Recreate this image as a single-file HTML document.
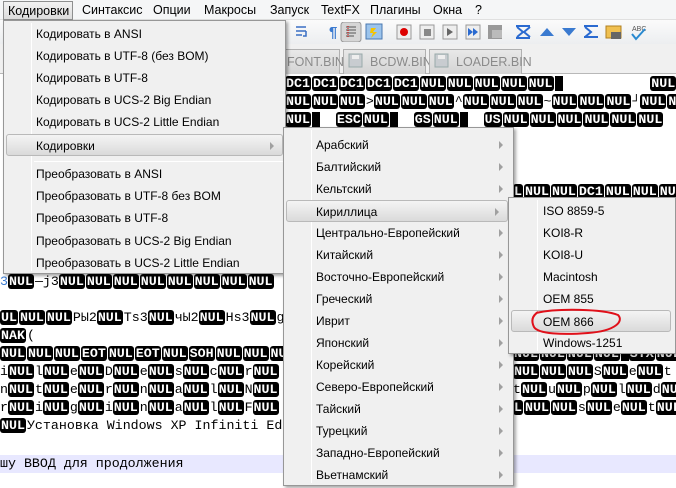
<!DOCTYPE html>
<html><head><meta charset="utf-8"><style>
*{margin:0;padding:0;box-sizing:border-box}
body{width:676px;height:488px;overflow:hidden;position:relative;background:#fff;font-family:"Liberation Sans","Noto Sans CJK SC",sans-serif;font-size:12px;color:#000}
.mb{position:absolute;left:0;top:0;width:676px;height:20px;background:#f5f6f7;border-bottom:1px solid #e0e0e0;z-index:2}
.mb span{position:absolute;top:3px;font-size:12.5px}
.mb .act{left:3px;top:1px;width:70px;height:19px;border:1px solid #8e8f8f;background:linear-gradient(#f2f2f2,#dcdcdc);padding:2px 0 0 4px}
.tb{position:absolute;left:0;top:20px;width:676px;height:24px;background:linear-gradient(#fbfbfb,#eceef0)}
.tabs{position:absolute;left:0;top:44px;width:676px;height:30px;background:#f0f0f0;border-bottom:1px solid #b8b8b8}
.tab{position:absolute;top:49px;height:25px;background:linear-gradient(#e8e8e8,#d4d4d4);border:1px solid #b0b0b0;border-bottom:none;color:#8a8a8a;font-size:12.5px;padding:5px 0 0 8px}
.ed{position:absolute;left:0;top:0;font-family:"Liberation Mono",monospace;font-size:13.3px;line-height:18px;white-space:pre;color:#000}
.r{position:absolute;height:18px;white-space:pre}
i{font-style:normal;background:#000;color:#fff;border-radius:3px;font-size:13.3px;font-weight:bold;padding:0 1px;margin-right:1px}
.m{position:absolute;background:#f0f0f0;border:1px solid #979797;box-shadow:2px 2px 3px rgba(0,0,0,.35);z-index:3}
.m .g{position:absolute;top:2px;bottom:2px;width:1px;background:#e2e3e3;border-right:1px solid #fff}
.it{position:absolute;left:2px;right:2px;height:22px;padding-top:4px;font-size:12px}
.hl{background:linear-gradient(#f4f4f4,#dadada);border:1px solid #b9b9b9;border-radius:3px}
.ar{position:absolute;right:8px;top:7px;width:0;height:0;border-left:4px solid #a0a0a0;border-top:4px solid transparent;border-bottom:4px solid transparent}
.sep{position:absolute;height:1px;background:#e0e0e0;border-bottom:1px solid #fff}
</style></head><body>

<div class="mb">
<span class="act">Кодировки</span>
<span style="left:82px">Синтаксис</span>
<span style="left:153px">Опции</span>
<span style="left:204px">Макросы</span>
<span style="left:270px">Запуск</span>
<span style="left:321px">TextFX</span>
<span style="left:370px">Плагины</span>
<span style="left:433px">Окна</span>
<span style="left:475px">?</span>
</div>

<div class="tb"></div>
<svg style="position:absolute;left:286px;top:22px" width="390" height="20">
<g fill="none" stroke="#3a6fc4" stroke-width="1.5"><path d="M10 5h10M10 9h10M10 13h6M20 9v5h-3"/></g>
<text x="43" y="15" fill="#3a7ad0" font-family="Liberation Sans" font-size="15" font-weight="bold">¶</text>
<rect x="55" y="0" width="20" height="20" rx="3" fill="#d6d6d6" stroke="#999"/>
<path d="M60 5h10M60 8h10M60 11h10M60 14h8" stroke="#555"/>
<path d="M62 4v12" stroke="#d00" stroke-dasharray="1 1"/>
<rect x="80" y="2" width="16" height="15" fill="#9cc4ec" stroke="#4a78b0"/><path d="M85 6l5 0-3 4 4 0-6 6 2-5-3 0z" fill="#f5c400"/>
<rect x="111" y="3" width="14" height="14" fill="#eee" stroke="#999"/><circle cx="118" cy="10" r="4" fill="#d00"/>
<rect x="134" y="3" width="14" height="14" fill="#eee" stroke="#999"/><rect x="138" y="7" width="7" height="7" fill="#888"/>
<rect x="157" y="3" width="14" height="14" fill="#eee" stroke="#999"/><path d="M161 6l6 4-6 4z" fill="#666"/>
<rect x="180" y="3" width="14" height="14" fill="#eee" stroke="#999"/><path d="M182 6l5 4-5 4zM187 6l5 4-5 4z" fill="#2a6ad0"/>
<rect x="202" y="3" width="14" height="14" fill="#999"/><rect x="206" y="8" width="10" height="8" fill="#bbb"/>
<path d="M230 4h14M231 5l6 5-6 5M244 5l-6 5 6 5M230 16h14" stroke="#2a6ad0" stroke-width="2" fill="none"/>
<path d="M254 14l7-8 7 8z" fill="#3a7ad0"/>
<path d="M276 6l7 8 7-8z" fill="#3a7ad0"/>
<path d="M298 4h14M299 5l6 5-6 5M312 15h-14" stroke="#2a6ad0" stroke-width="2" fill="none"/>
<rect x="320" y="4" width="15" height="12" fill="#f0c050" stroke="#b08020"/><rect x="325" y="10" width="10" height="7" fill="#666"/>
<text x="346" y="9" font-size="7" fill="#555" font-family="Liberation Sans">ABC</text><path d="M346 12l4 5 9-10" stroke="#2a8ad0" stroke-width="2" fill="none"/>
</svg>

<div class="tabs"></div>
<div class="tab" style="left:270px;width:70px;padding-left:16px">FONT.BIN</div>
<div class="tab" style="left:343px;width:83px;padding-left:26px">BCDW.BIN</div>
<div class="tab" style="left:429px;width:93px;padding-left:26px">LOADER.BIN</div>
<svg style="position:absolute;left:348px;top:53px" width="200" height="16"><rect x="1" y="1" width="13" height="13" fill="#c8ccd0" stroke="#9aa"/><rect x="4" y="2" width="7" height="4" fill="#eee"/><rect x="87" y="1" width="13" height="13" fill="#c8ccd0" stroke="#9aa"/><rect x="90" y="2" width="7" height="4" fill="#eee"/></svg>

<div class="ed">
<div class="r" style="top:75px;left:285px"><i>DC1</i><i>DC1</i><i>DC1</i><i>DC1</i><i>DC1</i><i>NUL</i><i>NUL</i><i>NUL</i><i>NUL</i><i>NUL</i><span style="background:#000"> </span>           <i>NUL</i><i>NUL</i></div>
<div class="r" style="top:93px;left:285px"><i>NUL</i><i>NUL</i><i>NUL</i>&gt;<i>NUL</i><i>NUL</i><i>NUL</i>^<i>NUL</i><i>NUL</i><i>NUL</i>~<i>NUL</i><i>NUL</i><i>NUL</i>┘<i>NUL</i><i>NUL</i></div>
<div class="r" style="top:111px;left:285px"><i>NUL</i><span style="background:#000"> </span>  <i>ESC</i><i>NUL</i><span style="background:#000"> </span>  <i>GS</i><i>NUL</i><span style="background:#000"> </span>  <i>US</i><i>NUL</i><i>NUL</i><i>NUL</i><i>NUL</i><i>NUL</i><i>NUL</i></div>
<div class="r" style="top:183px;left:513px"><i>L</i><i>NUL</i><i>NUL</i><i>DC1</i><i>NUL</i><i>NUL</i><i>NUL</i></div>
<div class="r" style="top:273px;left:0"><span style="color:#3a7ad0">3</span><i>NUL</i>—j3<i>NUL</i><i>NUL</i><i>NUL</i><i>NUL</i><i>NUL</i><i>NUL</i><i>NUL</i><i>NUL</i></div>
<div class="r" style="top:309px;left:0"><i>UL</i><i>NUL</i><i>NUL</i>PЫ2<i>NUL</i>Ts3<i>NUL</i>чЫ2<i>NUL</i>Hs3<i>NUL</i>g</div>
<div class="r" style="top:327px;left:0"><i>NAK</i>(</div>
<div class="r" style="top:345px;left:0"><i>NUL</i><i>NUL</i><i>NUL</i><i>EOT</i><i>NUL</i><i>EOT</i><i>NUL</i><i>SOH</i><i>NUL</i><i>NUL</i><i>NUL</i></div>
<div class="r" style="top:363px;left:0">i<i>NUL</i>l<i>NUL</i>e<i>NUL</i>D<i>NUL</i>e<i>NUL</i>s<i>NUL</i>c<i>NUL</i>r<i>NUL</i></div>
<div class="r" style="top:381px;left:0">n<i>NUL</i>t<i>NUL</i>e<i>NUL</i>r<i>NUL</i>n<i>NUL</i>a<i>NUL</i>l<i>NUL</i>N<i>NUL</i></div>
<div class="r" style="top:399px;left:0">r<i>NUL</i>i<i>NUL</i>g<i>NUL</i>i<i>NUL</i>n<i>NUL</i>a<i>NUL</i>l<i>NUL</i>F<i>NUL</i></div>
<div class="r" style="top:417px;left:0"><i>NUL</i>Установка Windows XP Infiniti Ed</div>
<div class="r" style="top:455px;left:0;width:676px;background:#e8e8ff">шу ВВОД для продолжения</div>
<div class="r" style="top:345px;left:513px"><i>NUL</i><i>NUL</i><i>NUL</i><i>NUL</i><span style="background:#000"> </span><i>STX</i><i>NUL</i></div>
<div class="r" style="top:363px;left:513px"><i>NUL</i><i>NUL</i><i>NUL</i>S<i>NUL</i>e<i>NUL</i>t</div>
<div class="r" style="top:381px;left:513px">t<i>NUL</i>u<i>NUL</i>p<i>NUL</i>l<i>NUL</i>d<i>NUL</i></div>
<div class="r" style="top:399px;left:513px"><i>L</i><i>NUL</i><i>NUL</i>s<i>NUL</i>e<i>NUL</i>t<i>NUL</i></div>
</div>

<div class="m" style="left:3px;top:20px;width:283px;height:254px">
<div class="g" style="left:27px"></div>
<div class="it" style="top:2px;padding-left:30px">Кодировать в ANSI</div>
<div class="it" style="top:24px;padding-left:30px">Кодировать в UTF-8 (без BOM)</div>
<div class="it" style="top:46px;padding-left:30px">Кодировать в UTF-8</div>
<div class="it" style="top:68px;padding-left:30px">Кодировать в UCS-2 Big Endian</div>
<div class="it" style="top:90px;padding-left:30px">Кодировать в UCS-2 Little Endian</div>
<div class="it hl" style="top:113px;padding-left:29px">Кодировки<div class="ar"></div></div>
<div class="sep" style="left:30px;right:2px;top:140px"></div>
<div class="it" style="top:142px;padding-left:30px">Преобразовать в ANSI</div>
<div class="it" style="top:164px;padding-left:30px">Преобразовать в UTF-8 без BOM</div>
<div class="it" style="top:186px;padding-left:30px">Преобразовать в UTF-8</div>
<div class="it" style="top:209px;padding-left:30px">Преобразовать в UCS-2 Big Endian</div>
<div class="it" style="top:231px;padding-left:30px">Преобразовать в UCS-2 Little Endian</div>
</div>

<div class="m" style="left:283px;top:127px;width:231px;height:359px">
<div class="g" style="left:27px"></div>
<div class="it" style="top:6px;padding-left:30px">Арабский<div class="ar"></div></div>
<div class="it" style="top:28px;padding-left:30px">Балтийский<div class="ar"></div></div>
<div class="it" style="top:50px;padding-left:30px">Кельтский<div class="ar"></div></div>
<div class="it hl" style="top:72px;padding-left:29px;right:5px">Кириллица<div class="ar"></div></div>
<div class="it" style="top:94px;padding-left:30px">Центрально-Европейский<div class="ar"></div></div>
<div class="it" style="top:116px;padding-left:30px">Китайский<div class="ar"></div></div>
<div class="it" style="top:138px;padding-left:30px">Восточно-Европейский<div class="ar"></div></div>
<div class="it" style="top:160px;padding-left:30px">Греческий<div class="ar"></div></div>
<div class="it" style="top:182px;padding-left:30px">Иврит<div class="ar"></div></div>
<div class="it" style="top:204px;padding-left:30px">Японский<div class="ar"></div></div>
<div class="it" style="top:226px;padding-left:30px">Корейский<div class="ar"></div></div>
<div class="it" style="top:248px;padding-left:30px">Северо-Европейский<div class="ar"></div></div>
<div class="it" style="top:270px;padding-left:30px">Тайский<div class="ar"></div></div>
<div class="it" style="top:292px;padding-left:30px">Турецкий<div class="ar"></div></div>
<div class="it" style="top:314px;padding-left:30px">Западно-Европейский<div class="ar"></div></div>
<div class="it" style="top:336px;padding-left:30px">Вьетнамский<div class="ar"></div></div>
</div>

<div class="m" style="left:508px;top:197px;width:168px;height:157px">
<div class="g" style="left:28px"></div>
<div class="it" style="top:2px;padding-left:32px">ISO 8859-5</div>
<div class="it" style="top:24px;padding-left:32px">KOI8-R</div>
<div class="it" style="top:46px;padding-left:32px">KOI8-U</div>
<div class="it" style="top:68px;padding-left:32px">Macintosh</div>
<div class="it" style="top:90px;padding-left:32px">OEM 855</div>
<div class="it hl" style="top:112px;padding-left:31px;right:4px">OEM 866</div>
<div class="it" style="top:134px;padding-left:32px">Windows-1251</div>
</div>
<svg style="position:absolute;left:528px;top:307px;z-index:4" width="96" height="30"><path d="M8 6 C30 1 75 2 90 8 C96 14 88 24 60 26 C35 28 10 27 6 20 C3 14 4 9 10 5" fill="none" stroke="#e0101a" stroke-width="2"/></svg>
</body></html>
